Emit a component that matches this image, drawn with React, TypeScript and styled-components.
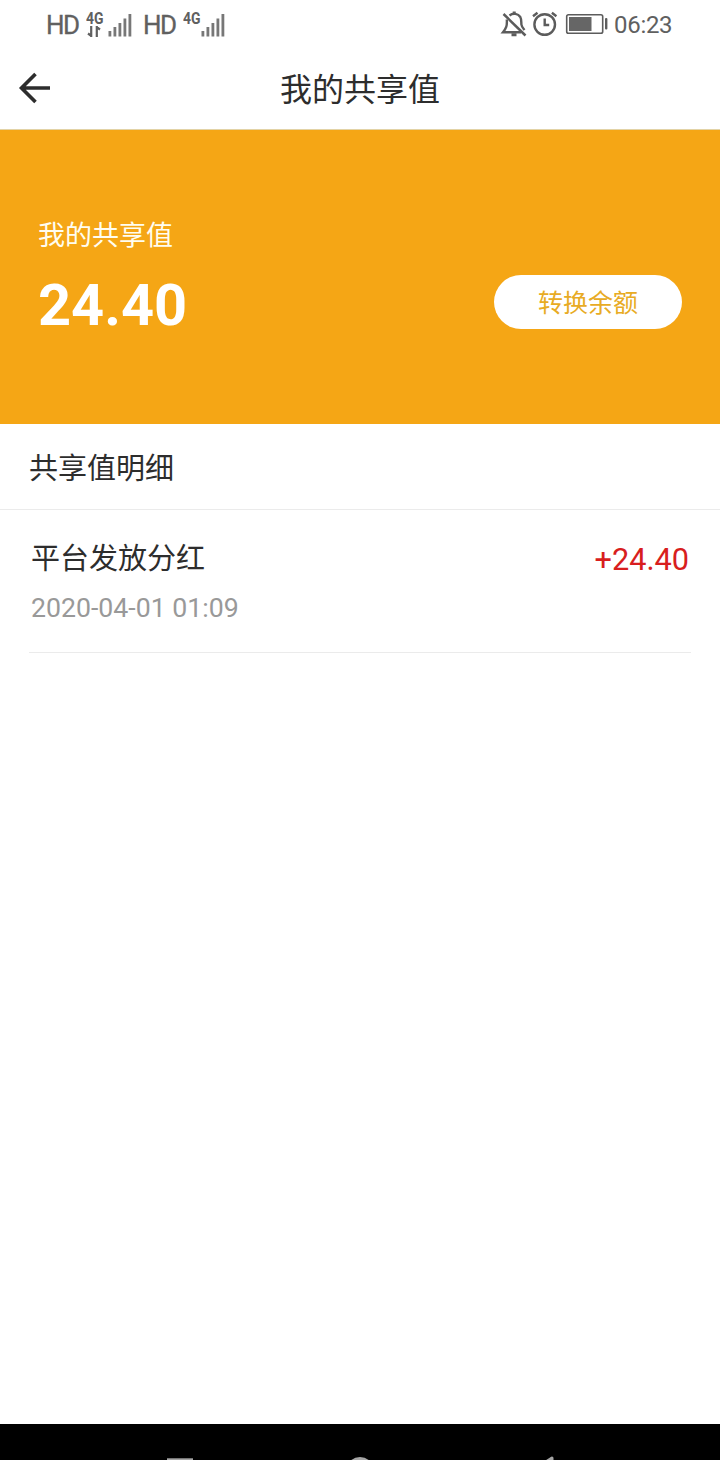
import React from 'react';
import styled, { createGlobalStyle } from 'styled-components';

const GlobalStyle = createGlobalStyle`
  * { box-sizing: border-box; }
  html, body { margin: 0; padding: 0; background: #fff; }
  body { font-family: "Noto Sans CJK SC", sans-serif; color: #2d2d2d; }
`;

const Screen = styled.div`
  width: 720px;
  height: 1460px;
  display: flex;
  flex-direction: column;
  overflow: hidden;
  background: #fff;
`;

const StatusBar = styled.div`
  height: 48px;
  padding: 0 48px 0 46px;
  display: flex;
  justify-content: space-between;
  flex: none;
`;

const StatusGroup = styled.div`
  display: flex;
  align-items: flex-start;
`;

const StatusText = styled.span<{ $size: number; $width: number; $indent?: number; $tight?: boolean }>`
  width: ${p => p.$width}px;
  padding-top: 1px;
  padding-left: ${p => p.$indent ?? 0}px;
  font: 400 ${p => p.$size}px/48px Roboto, sans-serif;
  letter-spacing: ${p => (p.$tight ? -1.6 : -0.3)}px;
  color: #606060;
  white-space: nowrap;
  -webkit-text-stroke: ${p => (p.$tight ? 0.3 : 0)}px #606060;
`;

const NetworkLabel = styled.span`
  display: block;
  height: 14px;
  font: 700 17px/14px Roboto, sans-serif;
  transform: scaleX(0.82);
  transform-origin: left;
  letter-spacing: 0;
  color: #606060;
`;

const Network = styled.div<{ $width: number }>`
  width: ${p => p.$width}px;
  padding-top: 11px;
  display: flex;
  flex-direction: column;
`;

const Header = styled.header`
  height: 82px;
  flex: none;
  display: grid;
  grid-template-columns: 70px 1fr 70px;
  align-items: start;
  border-bottom: 1px solid #e3d3a6;
`;

const BackButton = styled.button`
  height: 81px;
  padding: 0 0 2px 18px;
  border: 0;
  background: none;
  display: flex;
  align-items: center;
`;

const Title = styled.h1`
  margin: 0;
  font-size: 32px;
  font-weight: 400;
  line-height: 78px;
  text-align: center;
`;

const BalanceCard = styled.section`
  height: 294px;
  flex: none;
  padding: 84px 38px 0;
  display: flex;
  justify-content: space-between;
  background: #f5a615;
`;

const BalanceLabel = styled.div`
  font-size: 27px;
  line-height: 40px;
  color: #fffdf0;
`;

const BalanceValue = styled.div`
  margin-top: 16px;
  font: 700 57.7px/70px Roboto, sans-serif;
  color: #fff;
`;

const ConvertButton = styled.button`
  width: 188px;
  height: 54px;
  margin-top: 61px;
  padding: 0 0 1px;
  border: 0;
  border-radius: 27px;
  background: #fff;
  font-family: inherit;
  font-size: 25px;
  line-height: 53px;
  color: #e8ab24;
`;

const SectionTitle = styled.h2`
  height: 86px;
  flex: none;
  margin: 0;
  padding-left: 29px;
  border-bottom: 1px solid #ebebeb;
  font-size: 29px;
  font-weight: 400;
  line-height: 85px;
`;

const List = styled.main`
  flex: 1;
  padding: 0 29px;
`;

const Row = styled.div`
  height: 143px;
  padding: 25px 2px 0;
  display: flex;
  justify-content: space-between;
  border-bottom: 1px solid #ebebeb;
`;

const RowTitle = styled.div`
  font-size: 29px;
  line-height: 43px;
`;

const RowDate = styled.div`
  margin-top: 10px;
  font: 400 26.7px/40px Roboto, sans-serif;
  color: #999;
`;

const Amount = styled.div`
  padding-top: 4px;
  font: 400 30.7px/42px Roboto, sans-serif;
  color: #d81e1e;
`;

const NavBar = styled.footer`
  height: 36px;
  flex: none;
  background: #000;
`;

const Signal = () => (
  <svg width="26" height="48" viewBox="0 0 26 48" fill="#777">
    <rect x="0.5" y="31" width="2.8" height="5.5" />
    <rect x="5.5" y="27" width="2.8" height="9.5" />
    <rect x="10.5" y="23" width="2.8" height="13.5" />
    <rect x="15.5" y="18.5" width="2.8" height="18" />
    <rect x="20.5" y="14" width="2.8" height="22.5" />
  </svg>
);

const DataArrows = () => (
  <svg width="16" height="13" viewBox="0 0 16 13" fill="none" stroke="#606060" strokeWidth="2.2">
    <path d="M5.2 1V12M5.5 11L2 8.5M10.8 12V1M10.5 2L14 4.5" />
  </svg>
);

const BellOff = () => (
  <svg width="31" height="48" viewBox="0 0 31 48" fill="none" stroke="#5c5c5c" strokeWidth="2.4">
    <path d="M3.5 14L25.5 35.5" strokeWidth="2.5" />
    <path d="M9.5 15.5C13 12.8 18 13.4 20.3 17C21.5 19 21.2 21.5 21.4 24.5C21.6 26.5 23 28 24.5 30" />
    <path d="M6.8 19.5C7.3 26 6 28.5 3 32.2H21" />
    <path d="M14.2 11.5V14M11.5 34.7H16.5" strokeWidth="3" />
  </svg>
);

const Alarm = () => (
  <svg width="34" height="48" viewBox="0 0 34 48" fill="none" stroke="#5c5c5c" strokeWidth="2.4">
    <circle cx="13.7" cy="24.5" r="10.3" />
    <path d="M13.7 18.5V25H18.2" />
    <path d="M2 16.2L6.5 12.7M20.9 12.7L25.4 16.2" />
  </svg>
);

const Battery = () => (
  <svg width="48" height="48" viewBox="0 0 48 48">
    <rect x="1.7" y="14.8" width="36" height="18.4" rx="1.8" fill="none" stroke="#5c5c5c" strokeWidth="1.6" />
    <rect x="4" y="17" width="22.5" height="14" fill="#666" />
    <rect x="40" y="18" width="2.4" height="11.5" rx="1" fill="#5c5c5c" />
  </svg>
);

const BackArrow = () => (
  <svg width="34" height="34" viewBox="0 0 34 34" fill="none" stroke="#2d2d2d" strokeWidth="3.6">
    <path d="M32 17H4M17.5 3L3.5 17L17.5 31" />
  </svg>
);

const NavIcons = () => (
  <svg width="720" height="36" viewBox="0 0 720 36" fill="none" stroke="#a5a5a5" strokeWidth="3">
    <rect x="168.5" y="35.8" width="23" height="23" />
    <circle cx="360" cy="47" r="12.5" />
    <path d="M552 34L532 47L552 60Z" strokeLinejoin="round" />
  </svg>
);

const entries = [{ title: '平台发放分红', date: '2020-04-01 01:09', amount: '+24.40' }];

export default function App() {
  return (
    <>
      <GlobalStyle />
      <Screen>
        <StatusBar>
          <StatusGroup>
            <StatusText $size={26} $width={40} $tight>HD</StatusText>
            <Network $width={22}>
              <NetworkLabel>4G</NetworkLabel>
              <DataArrows />
            </Network>
            <Signal />
            <StatusText $size={26} $width={49} $indent={9} $tight>HD</StatusText>
            <Network $width={18}>
              <NetworkLabel>4G</NetworkLabel>
            </Network>
            <Signal />
          </StatusGroup>
          <StatusGroup>
            <BellOff />
            <Alarm />
            <Battery />
            <StatusText $size={24} $width={59} $indent={1}>06:23</StatusText>
          </StatusGroup>
        </StatusBar>
        <Header>
          <BackButton aria-label="返回">
            <BackArrow />
          </BackButton>
          <Title>我的共享值</Title>
        </Header>
        <BalanceCard>
          <div>
            <BalanceLabel>我的共享值</BalanceLabel>
            <BalanceValue>24.40</BalanceValue>
          </div>
          <ConvertButton>转换余额</ConvertButton>
        </BalanceCard>
        <SectionTitle>共享值明细</SectionTitle>
        <List>
          {entries.map(e => (
            <Row key={e.date}>
              <div>
                <RowTitle>{e.title}</RowTitle>
                <RowDate>{e.date}</RowDate>
              </div>
              <Amount>{e.amount}</Amount>
            </Row>
          ))}
        </List>
        <NavBar>
          <NavIcons />
        </NavBar>
      </Screen>
    </>
  );
}
